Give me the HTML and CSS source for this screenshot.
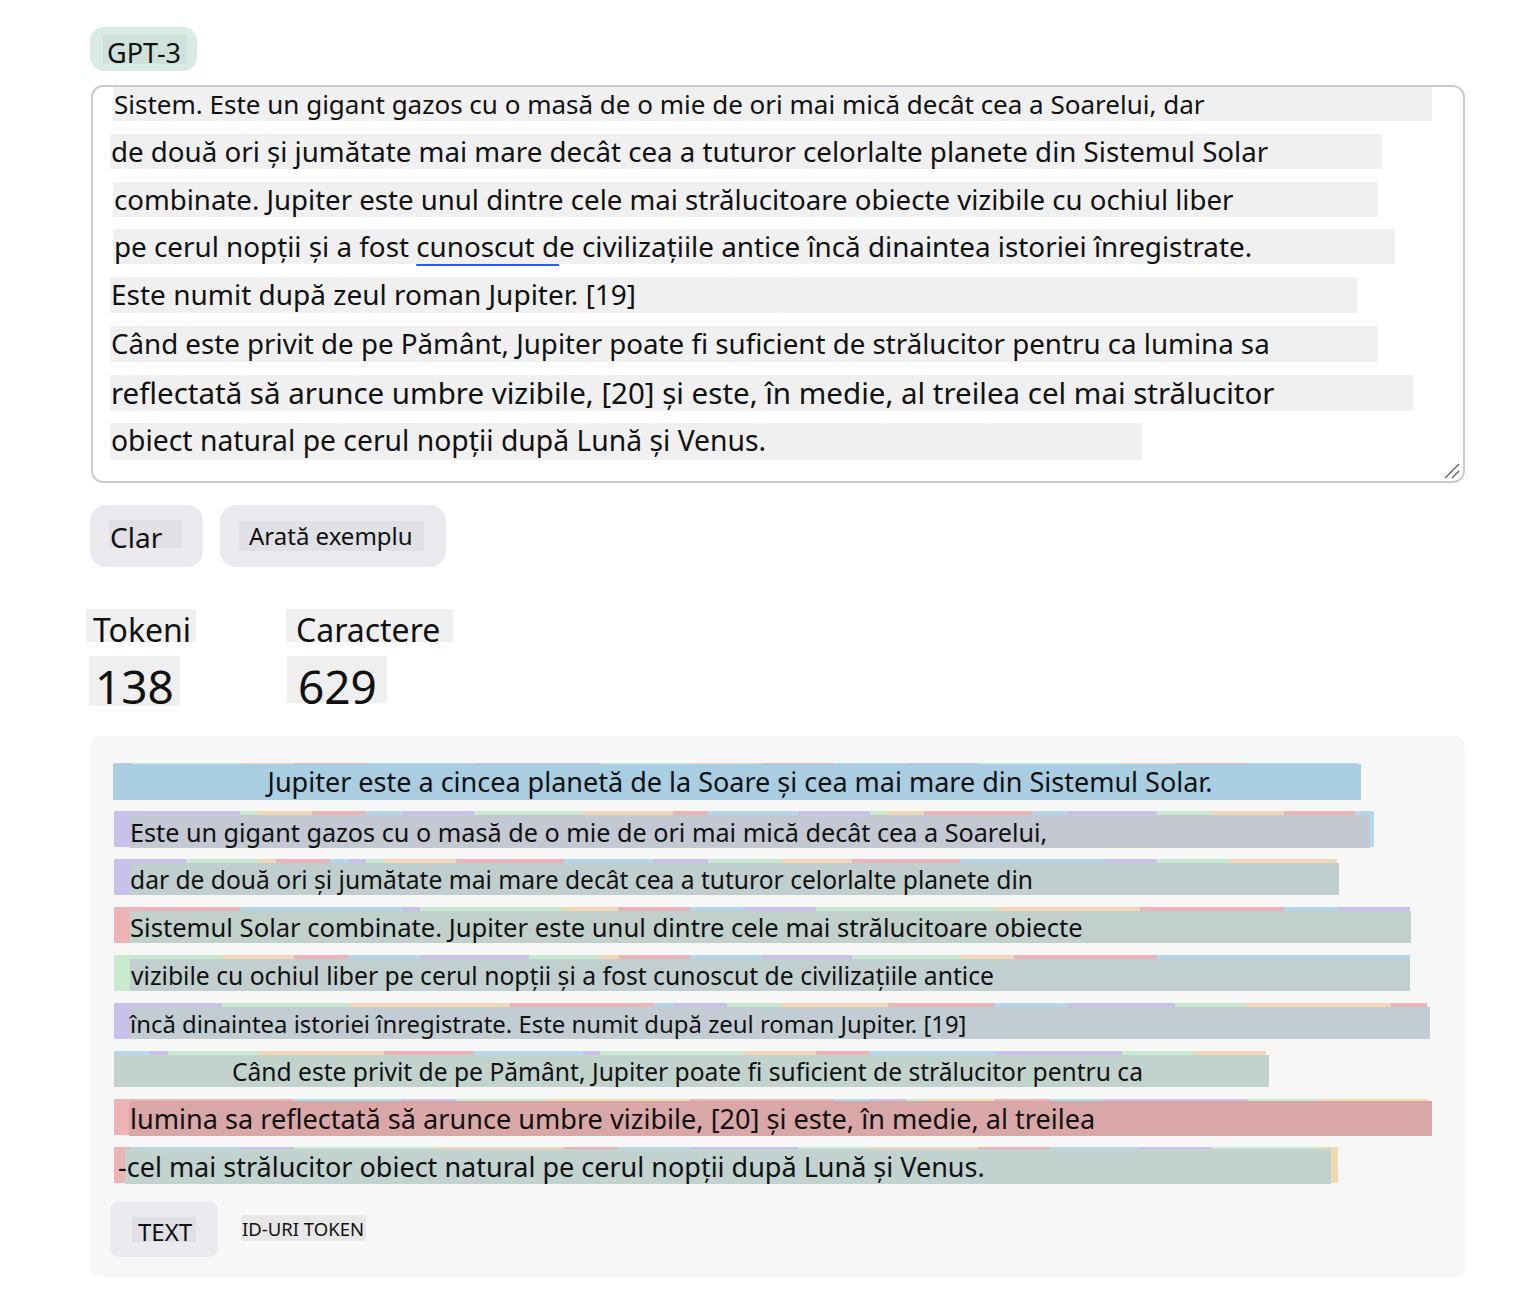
FILE: index.html
```html
<!DOCTYPE html>
<html lang="ro">
<head>
<meta charset="utf-8">
<title>Tokenizer</title>
<link rel="stylesheet" href="styles.css">
</head>
<body>
<main class="page">
  <div class="model-pill"><span class="model-label">GPT-3</span></div>

  <div class="editor">
    <div class="ta-line l1">Sistem. Este un gigant gazos cu o masă de o mie de ori mai mică decât cea a Soarelui, dar</div>
    <div class="ta-line l2">de două ori și jumătate mai mare decât cea a tuturor celorlalte planete din Sistemul Solar</div>
    <div class="ta-line l3">combinate. Jupiter este unul dintre cele mai strălucitoare obiecte vizibile cu ochiul liber</div>
    <div class="ta-line l4">pe cerul nopții și a fost <span class="spell">cunoscut d</span>e civilizațiile antice încă dinaintea istoriei înregistrate.</div>
    <div class="ta-line l5">Este numit după zeul roman Jupiter. [19]</div>
    <div class="ta-line l6">Când este privit de pe Pământ, Jupiter poate fi suficient de strălucitor pentru ca lumina sa</div>
    <div class="ta-line l7">reflectată să arunce umbre vizibile, [20] și este, în medie, al treilea cel mai strălucitor</div>
    <div class="ta-line l8">obiect natural pe cerul nopții după Lună și Venus.</div>
    <svg class="grip" width="18" height="18" viewBox="0 0 18 18" aria-hidden="true">
      <line x1="2" y1="16" x2="16" y2="2" stroke="#5a5a5a" stroke-width="1.3"/>
      <line x1="9" y1="16" x2="16" y2="9" stroke="#5a5a5a" stroke-width="1.3"/>
    </svg>
  </div>

  <div class="actions">
    <button class="btn btn-clear"><span class="btn-label">Clar</span></button>
    <button class="btn btn-example"><span class="btn-label">Arată exemplu</span></button>
  </div>

  <div class="stats">
    <div class="stat stat-tokens">
      <div class="stat-label">Tokeni</div>
      <div class="stat-value">138</div>
    </div>
    <div class="stat stat-chars">
      <div class="stat-label">Caractere</div>
      <div class="stat-value">629</div>
    </div>
  </div>

  <section class="panel">
    <div class="tok-row">
      <div class="stripes"><i class="p" style="width:17px"></i><i class="g" style="width:109px"></i><i class="o" style="width:54px"></i><i class="k" style="width:72px"></i><i class="b" style="width:108px"></i><i class="p" style="width:126px"></i><i class="g" style="width:91px"></i><i class="o" style="width:71px"></i><i class="k" style="width:72px"></i><i class="b" style="width:72px"></i><i class="p" style="width:72px"></i><i class="g" style="width:144px"></i><i class="o" style="width:54px"></i><i class="k" style="width:71px"></i><i class="b" style="width:111px"></i></div>
      <div class="over o1">Jupiter este a cincea planetă de la Soare și cea mai mare din Sistemul Solar.</div>
    </div>
    <div class="tok-row">
      <div class="stripes"><i class="p" style="width:126px"></i><i class="g" style="width:18px"></i><i class="o" style="width:54px"></i><i class="k" style="width:54px"></i><i class="b" style="width:36px"></i><i class="p" style="width:72px"></i><i class="g" style="width:109px"></i><i class="o" style="width:90px"></i><i class="k" style="width:35px"></i><i class="b" style="width:90px"></i><i class="p" style="width:72px"></i><i class="g" style="width:18px"></i><i class="o" style="width:36px"></i><i class="k" style="width:108px"></i><i class="b" style="width:35px"></i><i class="p" style="width:90px"></i><i class="g" style="width:54px"></i><i class="o" style="width:73px"></i><i class="k" style="width:71px"></i><i class="b" style="width:19px"></i></div>
      <div class="over o2">Este un gigant gazos cu o masă de o mie de ori mai mică decât cea a Soarelui,</div>
    </div>
    <div class="tok-row">
      <div class="stripes"><i class="p" style="width:72px"></i><i class="g" style="width:72px"></i><i class="o" style="width:18px"></i><i class="k" style="width:54px"></i><i class="b" style="width:18px"></i><i class="p" style="width:18px"></i><i class="g" style="width:18px"></i><i class="o" style="width:72px"></i><i class="k" style="width:108px"></i><i class="b" style="width:90px"></i><i class="p" style="width:54px"></i><i class="g" style="width:72px"></i><i class="o" style="width:72px"></i><i class="k" style="width:108px"></i><i class="b" style="width:144px"></i><i class="p" style="width:53px"></i><i class="g" style="width:72px"></i><i class="o" style="width:108px"></i></div>
      <div class="over o3">dar de două ori și jumătate mai mare decât cea a tuturor celorlalte planete din</div>
    </div>
    <div class="tok-row">
      <div class="stripes"><i class="k" style="width:126px"></i><i class="b" style="width:162px"></i><i class="p" style="width:18px"></i><i class="g" style="width:144px"></i><i class="o" style="width:54px"></i><i class="k" style="width:72px"></i><i class="b" style="width:54px"></i><i class="p" style="width:72px"></i><i class="g" style="width:179px"></i><i class="o" style="width:145px"></i><i class="k" style="width:144px"></i><i class="b" style="width:53px"></i><i class="p" style="width:73px"></i></div>
      <div class="over o4">Sistemul Solar combinate. Jupiter este unul dintre cele mai strălucitoare obiecte</div>
    </div>
    <div class="tok-row">
      <div class="stripes"><i class="g" style="width:108px"></i><i class="o" style="width:72px"></i><i class="k" style="width:54px"></i><i class="b" style="width:72px"></i><i class="p" style="width:109px"></i><i class="g" style="width:71px"></i><i class="o" style="width:19px"></i><i class="k" style="width:71px"></i><i class="b" style="width:72px"></i><i class="p" style="width:90px"></i><i class="g" style="width:108px"></i><i class="o" style="width:54px"></i><i class="k" style="width:143px"></i><i class="b" style="width:253px"></i></div>
      <div class="over o5">vizibile cu ochiul liber pe cerul nopții și a fost cunoscut de civilizațiile antice</div>
    </div>
    <div class="tok-row">
      <div class="stripes"><i class="p" style="width:108px"></i><i class="g" style="width:126px"></i><i class="o" style="width:162px"></i><i class="k" style="width:144px"></i><i class="b" style="width:19px"></i><i class="p" style="width:54px"></i><i class="g" style="width:53px"></i><i class="o" style="width:108px"></i><i class="k" style="width:107px"></i><i class="b" style="width:72px"></i><i class="p" style="width:108px"></i><i class="g" style="width:72px"></i><i class="o" style="width:144px"></i><i class="k" style="width:36px"></i></div>
      <div class="over o6">încă dinaintea istoriei înregistrate. Este numit după zeul roman Jupiter. [19]</div>
    </div>
    <div class="tok-row">
      <div class="stripes"><i class="b" style="width:36px"></i><i class="p" style="width:18px"></i><i class="g" style="width:90px"></i><i class="o" style="width:126px"></i><i class="k" style="width:90px"></i><i class="b" style="width:109px"></i><i class="p" style="width:17px"></i><i class="g" style="width:144px"></i><i class="o" style="width:72px"></i><i class="k" style="width:54px"></i><i class="b" style="width:125px"></i><i class="p" style="width:127px"></i><i class="g" style="width:71px"></i><i class="o" style="width:73px"></i></div>
      <div class="over o7">Când este privit de pe Pământ, Jupiter poate fi suficient de strălucitor pentru ca</div>
    </div>
    <div class="tok-row">
      <div class="stripes"><i class="k" style="width:180px"></i><i class="b" style="width:108px"></i><i class="p" style="width:54px"></i><i class="g" style="width:90px"></i><i class="o" style="width:144px"></i><i class="k" style="width:144px"></i><i class="b" style="width:36px"></i><i class="p" style="width:36px"></i><i class="g" style="width:18px"></i><i class="o" style="width:71px"></i><i class="k" style="width:55px"></i><i class="b" style="width:54px"></i><i class="p" style="width:144px"></i><i class="g" style="width:72px"></i><i class="o" style="width:108px"></i></div>
      <div class="over o8">lumina sa reflectată să arunce umbre vizibile, [20] și este, în medie, al treilea</div>
    </div>
    <div class="tok-row">
      <div class="stripes"><i class="k" style="width:17px"></i><i class="b" style="width:109px"></i><i class="p" style="width:54px"></i><i class="g" style="width:144px"></i><i class="o" style="width:126px"></i><i class="k" style="width:54px"></i><i class="b" style="width:72px"></i><i class="p" style="width:108px"></i><i class="g" style="width:72px"></i><i class="o" style="width:108px"></i><i class="k" style="width:72px"></i><i class="b" style="width:90px"></i><i class="p" style="width:72px"></i><i class="g" style="width:107px"></i><i class="o" style="width:19px"></i></div>
      <div class="over o9"><span class="dash">-</span>cel mai strălucitor obiect natural pe cerul nopții după Lună și Venus.</div>
    </div>

    <div class="tabs">
      <button class="tab tab-active"><span class="tab-label">TEXT</span></button>
      <span class="tab-plain">ID-URI TOKEN</span>
    </div>
  </section>
</main>
</body>
</html>
```

FILE: styles.css
```css
* { box-sizing: border-box; }

html, body {
  margin: 0;
  padding: 0;
  background: #ffffff;
}

body {
  font-family: "Noto Sans", "Open Sans", "DejaVu Sans", sans-serif;
  color: #111111;
}

.page {
  padding: 27px 62px 0 90px;
  width: 1528px;
}

/* model pill */
.model-pill {
  width: 107px;
  height: 44px;
  background: #d8ebe5;
  border-radius: 14px;
  padding: 8px 0 0 13px;
}
.model-label {
  display: block;
  width: 84px;
  height: 29px;
  background: #cfe1db;
  font-size: 27px;
  line-height: 36px;
  padding-left: 4px;
  white-space: nowrap;
  overflow: visible;
}

/* editor */
.editor {
  position: relative;
  margin-top: 14px;
  margin-left: 1px;
  width: 1374px;
  height: 398px;
  border: 2px solid #cbcbd5;
  border-radius: 12px;
  display: flex;
  flex-direction: column;
  gap: 12.75px;
  overflow: hidden;
}
.grip {
  position: absolute;
  right: 2px;
  bottom: 1px;
}
.ta-line {
  height: 35px;
  background: #f0f0f0;
  font-size: 25px;
  line-height: 35px;
  white-space: nowrap;
  padding-left: 1px;
  flex: none;
}
.l1 { margin-left: 20px; width: 1319px; height: 34px; font-size: 26px; }
.l2 { margin-left: 17px; width: 1272px; font-size: 27.7px; }
.l3 { margin-left: 20px; width: 1265px; font-size: 27.6px; }
.l4 { margin-left: 20px; width: 1282px; font-size: 27.8px; }
.l5 { margin-left: 17px; width: 1247px; height: 36px; font-size: 28px; }
.l6 { margin-left: 17px; width: 1268px; height: 36px; font-size: 27.7px; }
.l7 { margin-left: 17px; width: 1303px; height: 36px; font-size: 29.5px; }
.l8 { margin-left: 17px; width: 1032px; height: 37px; font-size: 28.3px; }

.spell {
  text-decoration: underline;
  text-decoration-color: #2b5ee6;
  text-decoration-thickness: 2px;
  text-underline-offset: 7px;
}

/* buttons */
.actions {
  margin-top: 22px;
  display: flex;
  gap: 17px;
}
.btn {
  height: 62px;
  border: none;
  border-radius: 16px;
  background: #ebebef;
  font-family: inherit;
  color: #111;
  padding: 0;
  display: flex;
  align-items: center;
  cursor: pointer;
}
.btn-clear { width: 113px; padding-left: 19px; }
.btn-example { width: 226px; padding-left: 19px; }
.btn-label {
  display: block;
  background: #e0e0e5;
  white-space: nowrap;
}
.btn-clear .btn-label {
  font-size: 28px;
  height: 28px;
  line-height: 34px;
  width: 73px;
  text-align: left;
  padding-left: 1px;
  margin-top: -4px;
}
.btn-example .btn-label {
  font-size: 24px;
  height: 30px;
  line-height: 30px;
  width: 185px;
  padding-left: 10px;
  text-align: left;
}

/* stats */
.stats {
  margin-top: 42px;
  display: flex;
}
.stat { display: flex; flex-direction: column; }
.stat-tokens { width: 200px; margin-left: -4px; }
.stat-label {
  height: 33px;
  background: #f0f0f0;
  font-size: 32px;
  line-height: 41px;
  white-space: nowrap;
  padding-left: 7px;
}
.stat-value {
  margin-top: 14px;
  height: 50px;
  background: #efefef;
  font-size: 46px;
  line-height: 61px;
  padding-left: 7px;
  white-space: nowrap;
}
.stat-tokens .stat-label { width: 110px; }
.stat-tokens .stat-value { width: 91px; margin-left: 3px; padding-left: 6px; }
.stat-chars .stat-label { width: 167px; padding-left: 10px; }
.stat-chars .stat-value { width: 100px; margin-left: 1px; padding-left: 11px; height: 47px; }

/* token panel */
.panel {
  margin-top: 30px;
  width: 1375px;
  background: #f7f7f7;
  border-radius: 10px;
  padding: 27px 20px 20px 23px;
  display: flex;
  flex-direction: column;
  gap: 12px;
}
.tok-row {
  position: relative;
  height: 36px;
}
.stripes {
  display: flex;
  height: 36px;
  margin-left: 1px;
}
.stripes i { display: block; height: 100%; flex: none; }
.stripes .p { background: #c9c0ec; }
.stripes .g { background: #c9ebcd; }
.stripes .o { background: #f2d8b1; }
.stripes .k { background: #ecb4b4; }
.stripes .b { background: #b3d8ef; }

.over {
  position: absolute;
  white-space: nowrap;
  color: #111;
  overflow: visible;
}
.o1 { left: 0; top: 1px; width: 1248px; height: 36px; line-height: 36px; background: #a9cde1; text-align: center; font-size: 27px; padding-left: 6px; }
.o2 { left: 17px; top: 4px; width: 1240px; height: 33px; line-height: 34px; background: #c4c8d2; font-size: 25.2px; }
.o3 { left: 17px; top: 4px; width: 1209px; height: 32px; line-height: 33px; background: #c0cfcd; font-size: 24.6px; }
.o4 { left: 17px; top: 4px; width: 1281px; height: 32px; line-height: 33px; background: #c1d0cb; font-size: 25.6px; }
.o5 { left: 17px; top: 4px; width: 1280px; height: 32px; line-height: 33px; background: #c1cfcf; padding-left: 1px; font-size: 24.7px; }
.o6 { left: 17px; top: 4px; width: 1300px; height: 32px; line-height: 33px; background: #c2cdd3; font-size: 23.9px; }
.o7 { left: 1px; top: 4px; width: 1155px; height: 32px; line-height: 33px; background: #c2d3cd; text-align: center; font-size: 24.6px; padding-right: 8px; }
.o8 { left: 16px; top: 2px; width: 1303px; height: 35px; line-height: 36px; background: #d9a7a7; font-size: 27.1px; padding-left: 1px; }
.o9 { left: 12px; top: 2px; width: 1206px; height: 35px; line-height: 35px; background: #c2d2ce; font-size: 27px; }
.dash { margin-left: -7px; }

/* tabs */
.tabs {
  margin-top: 7px;
  display: flex;
  align-items: center;
  margin-left: -3px;
}
.tab {
  width: 108px;
  height: 55px;
  border: none;
  border-radius: 8px;
  background: #ebebef;
  font-family: inherit;
  padding: 0 0 0 22px;
  display: flex;
  align-items: center;
}
.tab-label {
  display: block;
  width: 64px;
  height: 25px;
  background: #e0e0e4;
  font-size: 24px;
  line-height: 30px;
  color: #111;
  text-align: left;
  padding-left: 6px;
  margin-top: 0;
}
.tab-plain {
  margin-left: 23px;
  display: block;
  height: 26px;
  background: #e8e8e8;
  font-size: 18.5px;
  line-height: 28px;
  padding: 0 2px 0 1px;
  color: #111;
  margin-top: -4px;
}
```
